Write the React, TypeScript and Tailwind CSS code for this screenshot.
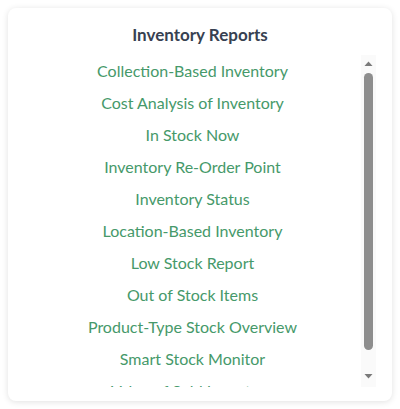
import React from "react";

const items = [
  "Collection-Based Inventory",
  "Cost Analysis of Inventory",
  "In Stock Now",
  "Inventory Re-Order Point",
  "Inventory Status",
  "Location-Based Inventory",
  "Low Stock Report",
  "Out of Stock Items",
  "Product-Type Stock Overview",
  "Smart Stock Monitor",
  "Value of Sold Inventory",
];

function ScrollBar() {
  return (
    <svg width="15" height="332" viewBox="0 0 15 332" className="shrink-0 block">
      <rect x="0" y="0" width="15" height="332" fill="#fafafa" />
      <polygon points="3.5,11 7.5,6.5 11.5,11" fill="#7a7a7a" />
      <rect x="3" y="18" width="9" height="277" rx="4.5" fill="#8e8e8e" />
      <polygon points="3.5,319 11.5,319 7.5,323.5" fill="#7a7a7a" />
    </svg>
  );
}

export default function App() {
  return (
    <div className="w-[400px] h-[409px] bg-white p-2" style={{ fontFamily: "Lato, 'Open Sans', sans-serif" }}>
      <div className="h-full rounded-lg bg-white shadow-[0_1px_6px_rgba(0,0,0,0.12)] px-4 pt-[15px] pb-[14px] flex flex-col">
        <h2 className="text-center text-[17px] leading-6 font-bold text-[#374151] mb-2">Inventory Reports</h2>
        <div className="flex-1 flex flex-row overflow-hidden">
          <ul className="flex-1 flex flex-col overflow-hidden">
            {items.map((t) => (
              <li key={t} className="text-center text-base leading-6 py-1 text-[#46996a] whitespace-nowrap">
                {t}
              </li>
            ))}
          </ul>
          <ScrollBar />
        </div>
      </div>
    </div>
  );
}
